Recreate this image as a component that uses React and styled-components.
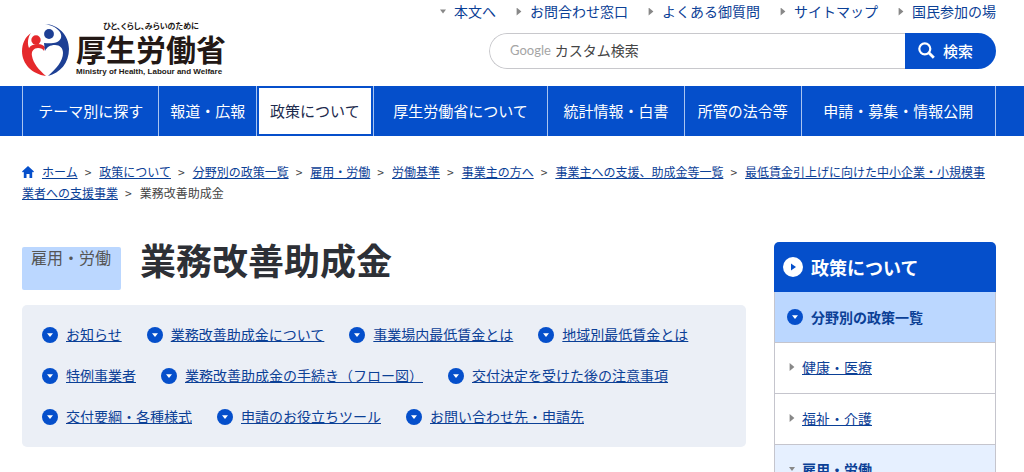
import styled, { createGlobalStyle } from "styled-components";

const GlobalStyle = createGlobalStyle`
  * {
    box-sizing: border-box;
  }

  html {
    scrollbar-width: none;
  }

  body {
    margin: 0;
    background: #fff;
    color: #444;
    font-family: "Noto Sans CJK JP", sans-serif;
    font-size: 14px;
    line-height: 21px;
  }

  ul,
  ol {
    margin: 0;
    padding: 0;
    list-style: none;
  }

  a {
    color: #0b4096;
  }
`;

const Header = styled.header`
  display: flex;
  justify-content: space-between;
  padding: 1px 28px 0 22px;
  height: 86px;
`;

const Logo = styled.a`
  display: flex;
  align-items: flex-start;
  gap: 7px;
  padding-top: 20px;
  color: #231815;
  text-decoration: none;
`;

const LogoMark = styled.svg`
  width: 47px;
  height: 52px;
  margin-top: 3px;
`;

const LogoText = styled.span`
  display: flex;
  flex-direction: column;
  font-weight: bold;
`;

const Tagline = styled.span`
  align-self: center;
  font-size: 8px;
  line-height: 10px;
  font-feature-settings: "palt";
`;

const Ministry = styled.span`
  font-size: 30px;
  line-height: 34px;
`;

const MinistryEnglish = styled.span`
  font-family: "Liberation Sans", sans-serif;
  font-size: 8px;
  line-height: 14px;
  white-space: nowrap;
`;

const HeaderTools = styled.div`
  display: flex;
  flex-direction: column;
  align-items: flex-end;
  gap: 11px;
`;

const ToolLinks = styled.ul`
  display: flex;
  gap: 20px;
`;

const ToolLink = styled.li`
  display: flex;
  align-items: center;
  gap: 8px;

  a {
    text-decoration: none;
  }
`;

const Arrow = styled.span`
  flex: none;
  width: 6px;
  height: 8px;
  background: #888;
  clip-path: ${(props) =>
    props.$down
      ? "polygon(0 25%, 100% 25%, 50% 75%)"
      : "polygon(10% 0, 90% 50%, 10% 100%)"};
`;

const SearchForm = styled.form`
  display: flex;
  width: 507px;
  height: 36px;
  border-radius: 18px;
  overflow: hidden;
`;

const SearchField = styled.label`
  display: flex;
  flex: 1;
  align-items: center;
  gap: 4px;
  padding: 0 0 2px 20px;
  border: 1px solid #c8c8cc;
  border-right: 0;
  border-radius: 18px 0 0 18px;
`;

const GoogleText = styled.span`
  color: #a5a5a5;
  font-family: Lato, sans-serif;
  font-size: 13px;
`;

const SearchInput = styled.input`
  flex: 1;
  min-width: 0;
  padding: 0;
  border: 0;
  outline: 0;
  font: inherit;

  &::placeholder {
    color: #444;
    opacity: 1;
  }
`;

const SearchButton = styled.button`
  display: flex;
  align-items: center;
  gap: 8px;
  width: 91px;
  padding: 0 0 2px 13px;
  border: 0;
  background: #054fcb;
  color: #fff;
  font: inherit;
  font-size: 15px;
  font-weight: 500;
  cursor: pointer;
`;

const GlobalNav = styled.nav`
  padding: 0 28px 0 22px;
  background: #054fcb;

  ul {
    display: flex;
    height: 50px;
    border-left: 1px solid #a9c4f0;
  }
`;

const NavItem = styled.li`
  display: flex;
  flex: ${(props) => props.$grow} 0 auto;
  border-right: 1px solid #a9c4f0;

  a {
    display: flex;
    flex: 1;
    align-items: center;
    justify-content: center;
    padding-bottom: 2px;
    background: ${(props) => (props.$active ? "#fff" : "#054fcb")};
    box-shadow: inset 0 0 0 2px #054fcb;
    color: ${(props) => (props.$active ? "#1d2a4d" : "#fff")};
    font-size: 15px;
    text-decoration: none;
  }
`;

const Breadcrumb = styled.nav`
  padding: 25px 28px 0 22px;
  font-size: 12px;

  li {
    display: inline;
  }
`;

const Separator = styled.span`
  margin: 0 8px 0 7px;
`;

const HomeIcon = styled.svg`
  width: 12px;
  height: 12px;
  margin-right: 8px;
  vertical-align: -1px;
`;

const Columns = styled.div`
  display: flex;
  align-items: flex-start;
  gap: 28px;
  padding: 39px 28px 0 22px;
`;

const Main = styled.main`
  flex: 1;
`;

const TitleRow = styled.div`
  display: flex;
  align-items: flex-start;
  gap: 19px;
  margin-bottom: 15px;
`;

const Category = styled.span`
  height: 43px;
  margin-top: 5px;
  padding: 0 10px 0 9px;
  border-radius: 2px;
  background: #bbd7ff;
  color: #555;
  font-size: 16px;
`;

const Title = styled.h1`
  margin: 0;
  color: #2d3036;
  font-size: 36px;
  line-height: 34px;
`;

const AnchorList = styled.ul`
  display: flex;
  flex-wrap: wrap;
  gap: 20px 25px;
  padding: 19px 20px 20px;
  border-radius: 5px;
  background: #ebeff6;
`;

const AnchorItem = styled.li`
  display: flex;
  align-items: center;
  gap: 8px;
`;

const Badge = styled.svg`
  flex: none;
  width: ${(props) => props.$size}px;
  height: ${(props) => props.$size}px;
`;

const SideNav = styled.nav`
  flex: none;
  width: 222px;
`;

const SideTitle = styled.a`
  display: flex;
  align-items: center;
  gap: 8px;
  height: 50px;
  padding-left: 9px;
  border-radius: 5px 5px 0 0;
  background: #054fcb;
  color: #fff;
  font-size: 18px;
  font-weight: bold;
  text-decoration: none;
`;

const SideBody = styled.div`
  border: 1px solid #c5c5cd;
  border-top: 0;
`;

const SideHeading = styled.a`
  display: flex;
  align-items: center;
  gap: 8px;
  height: 50px;
  padding-left: 12px;
  background: #bbd7ff;
  font-weight: bold;
  text-decoration: none;
`;

const SideItem = styled.li`
  display: flex;
  align-items: center;
  gap: 7px;
  height: 51px;
  padding: 0 14px 2px;
  border-top: 1px solid #c5c5cd;
  background: ${(props) => (props.$current ? "#e6f0ff" : "#fff")};

  a {
    font-weight: ${(props) => (props.$current ? "bold" : "normal")};
    text-decoration: ${(props) => (props.$current ? "none" : "underline")};
  }
`;

const toolLinks = [
  "本文へ",
  "お問合わせ窓口",
  "よくある御質問",
  "サイトマップ",
  "国民参加の場",
];

const navItems = [
  "テーマ別に探す",
  "報道・広報",
  "政策について",
  "厚生労働省について",
  "統計情報・白書",
  "所管の法令等",
  "申請・募集・情報公開",
];

const crumbs = [
  "ホーム",
  "政策について",
  "分野別の政策一覧",
  "雇用・労働",
  "労働基準",
  "事業主の方へ",
  "事業主への支援、助成金等一覧",
  "最低賃金引上げに向けた中小企業・小規模事業者への支援事業",
];

const anchors = [
  "お知らせ",
  "業務改善助成金について",
  "事業場内最低賃金とは",
  "地域別最低賃金とは",
  "特例事業者",
  "業務改善助成金の手続き（フロー図）",
  "交付決定を受けた後の注意事項",
  "交付要綱・各種様式",
  "申請のお役立ちツール",
  "お問い合わせ先・申請先",
];

const sideItems = ["健康・医療", "福祉・介護", "雇用・労働"];

function DownBadge() {
  return (
    <Badge $size={16} viewBox="0 0 16 16" aria-hidden="true">
      <circle cx="8" cy="8" r="8" fill="#054fcb" />
      <path d="M5 6.3h6L8 10z" fill="#fff" />
    </Badge>
  );
}

function RightBadge() {
  return (
    <Badge $size={20} viewBox="0 0 20 20" aria-hidden="true">
      <circle cx="10" cy="10" r="10" fill="#fff" />
      <path d="M8 6.5l5 3.5-5 3.5z" fill="#054fcb" />
    </Badge>
  );
}

function MinistryMark() {
  return (
    <LogoMark viewBox="0 0 47 52" aria-hidden="true">
      <path
        d="M9 9C3 13 0 20 0 27c0 13 10 23 24 25C17 46 11 39 10 32c-1-5 2-8 6-8 3 0 5 1 6 3l1-4c-2-2-4-3-7-3-4 0-7 1-9 4C5 19 6 13 9 9z"
        fill="#e5292c"
      />
      <circle cx="14" cy="16" r="4.7" fill="#e5292c" />
      <path
        d="M22 0c14 0 25 11 25 25 0 14-9 24-21 27 8-7 15-15 15-23 0-5-3-8-8-8-5 0-8 2-10 6l-1-8c8 1 15 0 17-5C41 8 33 1 22 0z"
        fill="#1d3f94"
      />
      <circle cx="27" cy="10" r="4.9" fill="#1d3f94" />
    </LogoMark>
  );
}

export default function App() {
  return (
    <>
      <GlobalStyle />
      <Header lang="ja">
        <Logo href="#">
          <MinistryMark />
          <LogoText>
            <Tagline>ひと、くらし、みらいのために</Tagline>
            <Ministry>厚生労働省</Ministry>
            <MinistryEnglish>
              Ministry of Health, Labour and Welfare
            </MinistryEnglish>
          </LogoText>
        </Logo>
        <HeaderTools>
          <ToolLinks>
            {toolLinks.map((label, index) => (
              <ToolLink key={label}>
                <Arrow $down={index === 0} />
                <a href="#">{label}</a>
              </ToolLink>
            ))}
          </ToolLinks>
          <SearchForm onSubmit={(event) => event.preventDefault()}>
            <SearchField>
              <GoogleText>Google</GoogleText>
              <SearchInput type="text" placeholder="カスタム検索" />
            </SearchField>
            <SearchButton type="submit">
              <svg
                width="17"
                height="17"
                viewBox="0 0 17 17"
                fill="none"
                stroke="#fff"
                aria-hidden="true"
              >
                <circle cx="6.8" cy="6.8" r="5.5" strokeWidth="2.2" />
                <path d="M10.8 10.8l5 5" strokeWidth="2.8" />
              </svg>
              検索
            </SearchButton>
          </SearchForm>
        </HeaderTools>
      </Header>

      <GlobalNav>
        <ul>
          {navItems.map((label, index) => (
            <NavItem key={label} $grow={label.length} $active={index === 2}>
              <a href="#">{label}</a>
            </NavItem>
          ))}
        </ul>
      </GlobalNav>

      <Breadcrumb>
        <ol>
          {crumbs.map((label, index) => (
            <li key={label}>
              {index === 0 && (
                <HomeIcon viewBox="0 0 12 12" aria-hidden="true">
                  <path
                    d="M6 0l6 5.5-1 1-.8-.7V12H7.500V8h-3v4H1.800V5.800L1 6.500l-1-1z"
                    fill="#054fcb"
                  />
                </HomeIcon>
              )}
              <a href="#">{label}</a>
              <Separator>&gt;</Separator>
            </li>
          ))}
          <li>業務改善助成金</li>
        </ol>
      </Breadcrumb>

      <Columns>
        <Main>
          <TitleRow>
            <Category>雇用・労働</Category>
            <Title>業務改善助成金</Title>
          </TitleRow>
          <AnchorList>
            {anchors.map((label) => (
              <AnchorItem key={label}>
                <DownBadge />
                <a href="#">{label}</a>
              </AnchorItem>
            ))}
          </AnchorList>
        </Main>
        <SideNav>
          <SideTitle href="#">
            <RightBadge />
            政策について
          </SideTitle>
          <SideBody>
            <SideHeading href="#">
              <DownBadge />
              分野別の政策一覧
            </SideHeading>
            <ul>
              {sideItems.map((label, index) => (
                <SideItem key={label} $current={index === 2}>
                  <Arrow $down={index === 2} />
                  <a href="#">{label}</a>
                </SideItem>
              ))}
            </ul>
          </SideBody>
        </SideNav>
      </Columns>
    </>
  );
}
